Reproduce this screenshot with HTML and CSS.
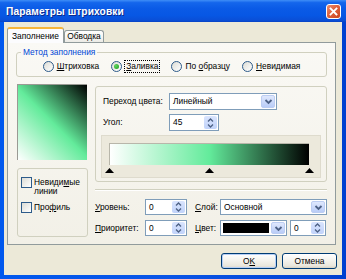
FILE: index.html
```html
<!DOCTYPE html>
<html lang="ru">
<head>
<meta charset="utf-8">
<title>Параметры штриховки</title>
<link rel="stylesheet" href="styles.css">
</head>
<body>
<div class="window">
  <div class="titlebar">
    <span class="title">Параметры штриховки</span>
    <span class="close"><svg width="13" height="13" viewBox="0 0 13 13"><path d="M3.5 3.5L9.5 9.5M9.5 3.5L3.5 9.5" stroke="#fff" stroke-width="1.8" stroke-linecap="square"/></svg></span>
  </div>
  <div class="client">
    <div class="tabs">
      <div class="tab active">Заполнение</div>
      <div class="tab">Обводка</div>
    </div>
    <div class="panel">
      <fieldset class="method">
        <legend>Метод заполнения</legend>
        <div class="radios">
          <label class="radio"><span class="rb"></span><span><u>Ш</u>триховка</span></label>
          <label class="radio"><span class="rb on"></span><span class="focus"><u>З</u>аливка</span></label>
          <label class="radio"><span class="rb"></span><span>По <u>о</u>бразцу</span></label>
          <label class="radio"><span class="rb"></span><span><u>Н</u>евидимая</span></label>
        </div>
      </fieldset>
      <div class="main">
        <div class="left">
          <div class="preview"></div>
          <div class="checks">
            <label class="check"><span class="cb"></span><span class="ctext">Невиди<u>м</u>ые<br>линии</span></label>
            <label class="check second"><span class="cb"></span><span class="ctext">Про<u>ф</u>иль</span></label>
          </div>
        </div>
        <div class="right">
          <div class="grad">
            <div class="row">
              <span class="lbl">Переход цвета:</span>
              <div class="field combo w108"><span class="val">Линейный</span><span class="dd"><svg width="9" height="7" viewBox="0 0 9 7"><path d="M1.5 2L4.5 5L7.5 2" fill="none" stroke="#4d6185" stroke-width="1.8"/></svg></span></div>
            </div>
            <div class="row gap4">
              <span class="lbl">Угол:</span>
              <div class="field spin w50"><span class="val">45</span><span class="sp"><svg width="7" height="12" viewBox="0 0 7 12"><path d="M1 4.5L3.5 2L6 4.5M1 7.5L3.5 10L6 7.5" fill="none" stroke="#4d6185" stroke-width="1.3"/></svg></span></div>
            </div>
            <div class="sunken">
              <div class="strip"></div>
              <div class="markers"><i></i><i></i><i></i></div>
            </div>
          </div>
          <div class="sep"></div>
          <div class="frow first">
            <span class="flbl"><u>У</u>ровень:</span>
            <div class="field spin w42"><span class="val">0</span><span class="sp"><svg width="7" height="12" viewBox="0 0 7 12"><path d="M1 4.5L3.5 2L6 4.5M1 7.5L3.5 10L6 7.5" fill="none" stroke="#4d6185" stroke-width="1.3"/></svg></span></div>
            <span class="slbl"><u>С</u>лой:</span>
            <div class="field combo grow"><span class="val">Основной</span><span class="dd"><svg width="9" height="7" viewBox="0 0 9 7"><path d="M1.5 2L4.5 5L7.5 2" fill="none" stroke="#4d6185" stroke-width="1.8"/></svg></span></div>
          </div>
          <div class="frow">
            <span class="flbl"><u>П</u>риоритет:</span>
            <div class="field spin w42"><span class="val">0</span><span class="sp"><svg width="7" height="12" viewBox="0 0 7 12"><path d="M1 4.5L3.5 2L6 4.5M1 7.5L3.5 10L6 7.5" fill="none" stroke="#4d6185" stroke-width="1.3"/></svg></span></div>
            <span class="slbl"><u>Ц</u>вет:</span>
            <div class="field combo color"><span class="swatch"></span><span class="dd"><svg width="9" height="7" viewBox="0 0 9 7"><path d="M1.5 2L4.5 5L7.5 2" fill="none" stroke="#4d6185" stroke-width="1.8"/></svg></span></div>
            <div class="field spin w36"><span class="val">0</span><span class="sp"><svg width="7" height="12" viewBox="0 0 7 12"><path d="M1 4.5L3.5 2L6 4.5M1 7.5L3.5 10L6 7.5" fill="none" stroke="#4d6185" stroke-width="1.3"/></svg></span></div>
          </div>
        </div>
      </div>
    </div>
    <div class="buttons">
      <button class="btn default">O<u>K</u></button>
      <button class="btn">Отмена</button>
    </div>
  </div>
</div>
</body>
</html>
```

FILE: styles.css
```css
html, body {
  margin: 0;
  padding: 0;
}
body {
  width: 346px;
  height: 279px;
  overflow: hidden;
  font-family: "Liberation Sans", Arial, sans-serif;
  font-size: 8.4px;
  line-height: 11px;
  color: #000;
  background: #0c4fd9;
}
.window {
  width: 346px;
  height: 279px;
  display: flex;
  flex-direction: column;
  background: linear-gradient(to right, #0058ee 0, #0a55e6 50%, #0040d0 100%);
  box-sizing: border-box;
}
.titlebar {
  height: 22px;
  flex: none;
  display: flex;
  align-items: center;
  padding: 0 5px 0 6px;
  background: linear-gradient(#3f8ef7 0%, #1466ec 12%, #0a5ae6 40%, #0757e4 70%, #0a4fd7 92%, #0843c4 100%);
}
.title {
  flex: 1;
  color: #fff;
  font-weight: bold;
  font-size: 10.2px;
  text-shadow: 1px 1px 0 #0a2a8c;
  letter-spacing: 0.1px;
}
.close {
  width: 15px;
  height: 15px;
  box-sizing: border-box;
  border: 1px solid #fff;
  border-radius: 3px;
  background: linear-gradient(135deg, #ec8d6f 0%, #e0623d 45%, #c9441c 100%);
  display: flex;
  align-items: center;
  justify-content: center;
  margin-top: 1px;
}
.close svg { display: block; }

.client {
  flex: 1;
  margin: 0 4px 4px 4px;
  background: #ece9d8;
  padding: 5px 0 0 3px;
  display: flex;
  flex-direction: column;
  box-sizing: border-box;
}

/* tabs */
.tabs {
  display: flex;
  align-items: flex-end;
  height: 16px;
  flex: none;
}
.tab {
  box-sizing: border-box;
  border: 1px solid #919b9c;
  border-bottom: none;
  border-radius: 3px 3px 0 0;
  text-align: center;
  background: linear-gradient(#ffffff, #ecebe6);
  width: 40px;
  height: 12px;
  line-height: 11px;
  margin-bottom: 1px;
}
.tab.active {
  position: relative;
  z-index: 1;
  width: 57px;
  height: 16px;
  margin-bottom: 0;
  border-top: 2px solid #f6b53a;
  background: #fcfcfe;
  line-height: 12px;
  padding-top: 1px;
}
.panel {
  width: 329px;
  height: 203px;
  box-sizing: border-box;
  margin-top: -1px;
  border: 1px solid #919b9c;
  background: linear-gradient(#faf9f5, #f2f0e7);
  padding: 4px 8px 0 8px;
}

/* method group */
.method {
  margin: 0;
  padding: 3px 0 4px;
  border: 1px solid #d0d0bf;
  border-radius: 3px;
  min-width: 0;
}
.method legend {
  color: #0046d5;
  padding: 0 2px;
  margin-left: 4px;
  line-height: 11px;
}
.radios {
  display: flex;
  justify-content: center;
  gap: 12px;
  height: 11px;
  align-items: center;
}
.radio {
  display: flex;
  align-items: center;
  gap: 3px;
}
.rb {
  width: 11px;
  height: 11px;
  box-sizing: border-box;
  border: 1px solid #2d5b8a;
  border-radius: 50%;
  background: linear-gradient(135deg, #dcdcd5, #ffffff);
  display: flex;
  align-items: center;
  justify-content: center;
}
.rb.on::after {
  content: "";
  width: 5px;
  height: 5px;
  border-radius: 50%;
  background: radial-gradient(circle at 35% 35%, #5fd65f, #1e9a1e);
}
.focus {
  outline: 1px dotted #000;
  outline-offset: 0;
  padding: 0 1px;
}

/* main area */
.main {
  display: grid;
  grid-template-columns: 71px 1fr;
  column-gap: 8px;
  margin-top: 7px;
  align-items: start;
}
.left {
  margin-left: 1px;
}
.preview {
  width: 70px;
  height: 76px;
  box-sizing: border-box;
  border-top: 1px solid #9a9a94;
  border-left: 1px solid #9a9a94;
  background: linear-gradient(45deg, #ffffff 0%, #63eb9b 50%, #000000 100%);
}
.checks {
  margin-top: 8px;
  width: 71px;
  height: 69px;
  box-sizing: border-box;
  border: 1px solid #d0d0bf;
  border-radius: 3px;
  padding: 8px 0 0 3px;
}
.check {
  display: flex;
  align-items: flex-start;
  gap: 2px;
}
.check.second {
  margin-top: 6px;
}
.ctext {
  line-height: 9px;
  margin-top: 1px;
}
.cb {
  width: 11px;
  height: 11px;
  flex: none;
  box-sizing: border-box;
  border: 1px solid #2d5b8a;
  background: linear-gradient(135deg, #dcdcd5, #ffffff);
}

.right {
  margin-top: 2px;
}
.grad {
  height: 96px;
  box-sizing: border-box;
  border: 1px solid #d0d0bf;
  border-radius: 3px;
  padding: 6px 4px 0 5px;
}
.row {
  display: flex;
  align-items: center;
  margin-left: 2px;
  height: 17px;
}
.row.gap4 { margin-top: 4px; }
.lbl { width: 66px; flex: none; }
.field {
  display: flex;
  align-items: stretch;
  box-sizing: border-box;
  border: 1px solid #7f9db9;
  background: #fff;
  height: 100%;
}
.field .val {
  flex: 1;
  padding-left: 3px;
  display: flex;
  align-items: center;
}
.w108 { width: 108px; }
.w50 { width: 50px; }
.w42 { width: 42px; }
.w36 { width: 36px; }
.grow { flex: 1; }
.dd {
  width: 14px;
  margin: 1px;
  box-sizing: border-box;
  border: 1px solid #bccdf2;
  border-radius: 2px;
  background: linear-gradient(#dfe8fd, #b9ccf7);
  display: flex;
  align-items: center;
  justify-content: center;
}
.sp {
  width: 13px;
  margin: 1px;
  box-sizing: border-box;
  border-radius: 2px;
  background: linear-gradient(#d9e4fd, #c1d3fa);
  display: flex;
  align-items: center;
  justify-content: center;
}
.sunken {
  margin-top: 4px;
  width: 220px;
  height: 43px;
  box-sizing: border-box;
  border: 1px solid #dedbcd;
  background: #ece9dc;
  padding: 7px 0 0 7px;
}
.strip {
  width: 200px;
  height: 22px;
  box-sizing: border-box;
  border-top: 1px solid #b8b6aa;
  border-left: 1px solid #b8b6aa;
  background: linear-gradient(to right, #ffffff 0%, #63eb9b 50%, #000000 100%);
}
.markers {
  display: flex;
  justify-content: space-between;
  width: 209px;
  margin: 3px 0 0 -4px;
}
.markers i {
  display: block;
  width: 9px;
  height: 5px;
  background: #000;
  clip-path: polygon(50% 0, 100% 100%, 0 100%);
}
.sep {
  margin-top: 7px;
  height: 0;
  border-top: 1px solid #d0d0bf;
  border-bottom: 1px solid #ffffff;
}
.frow {
  display: flex;
  align-items: center;
  height: 16px;
  margin-top: 5px;
}
.frow.first { margin-top: 8px; }
.flbl { width: 50px; flex: none; }
.slbl { width: 25px; flex: none; margin-left: 8px; }
.color { width: 67px; padding: 2px 0 2px 2px; }
.color .dd { margin: -1px 1px -1px 2px; }
.swatch { flex: 1; background: #000; }
.color + .spin { margin-left: 3px; }

/* buttons */
.buttons {
  display: flex;
  justify-content: flex-end;
  gap: 5px;
  margin-top: 8px;
  padding-right: 5px;
}
.btn {
  font: inherit;
  width: 56px;
  height: 16px;
  padding: 0;
  box-sizing: border-box;
  border: 1px solid #003c74;
  border-radius: 3px;
  background: linear-gradient(#ffffff 0%, #f6f5f0 40%, #e9e6dc 85%, #d8d2c3 100%);
  color: #000;
  line-height: 12px;
}
.btn.default {
  box-shadow: inset 0 0 0 1px #b6cff6;
}
.btn + .btn { width: 55px; }
u { text-decoration: underline; }
```
